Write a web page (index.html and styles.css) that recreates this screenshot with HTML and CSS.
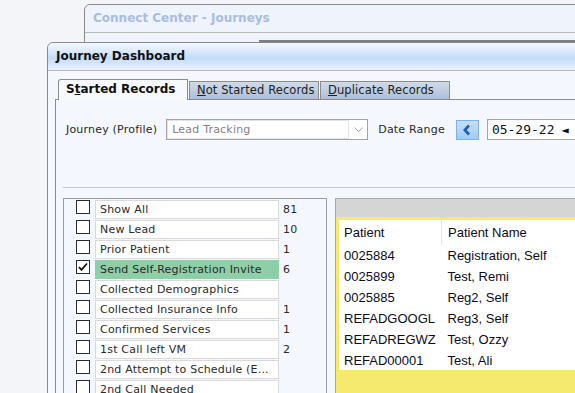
FILE: index.html
```html
<!DOCTYPE html>
<html>
<head>
  <title>Journey Dashboard</title>
  <link rel="stylesheet" href="styles.css">
</head>
<body>

<div class="desktop">

  <!-- Parent window, behind -->
  <div class="window window-back">
    <div class="titlebar">Connect Center - Journeys</div>
    <div class="back-body">
      <div class="back-pane"></div>
    </div>
  </div>

  <!-- Journey Dashboard window -->
  <div class="window window-front">
    <div class="titlebar">Journey Dashboard</div>
    <div class="client">

      <div class="tabs">
        <div class="tab active">S<u>t</u>arted Records</div>
        <div class="tab"><u>N</u>ot Started Records</div>
        <div class="tab"><u>D</u>uplicate Records</div>
      </div>

      <div class="tab-panel">
        <div class="filters">
          <span class="field-label">Journey (Profile)</span>
          <div class="combo">
            <span class="combo-text">Lead Tracking</span>
            <span class="combo-arrow">
              <svg width="9" height="6" viewBox="0 0 9 6"><path d="M0.5 0.5 L4.5 4.5 L8.5 0.5" fill="none" stroke="#a8a8a8" stroke-width="1"/></svg>
            </span>
          </div>
          <span class="field-label date-label">Date Range</span>
          <button class="nav-btn">
            <svg width="10" height="12" viewBox="0 0 10 12"><path d="M7 1.5 L2.8 6 L7 10.5" fill="none" stroke="#1c5fb8" stroke-width="2.6"/></svg>
          </button>
          <div class="date-box">05-29-22<span class="spin">&#9668;</span></div>
        </div>

        <div class="divider"></div>

        <div class="lists">
          <div class="status-list">
            <div class="status-row"><span class="check"></span><span class="status-name">Show All</span><span class="status-count">81</span></div>
            <div class="status-row"><span class="check"></span><span class="status-name">New Lead</span><span class="status-count">10</span></div>
            <div class="status-row"><span class="check"></span><span class="status-name">Prior Patient</span><span class="status-count">1</span></div>
            <div class="status-row selected"><span class="check checked">
              <svg width="12" height="12" viewBox="0 0 12 12"><path d="M2 6 L4.5 8.8 L10 2.5" fill="none" stroke="#111" stroke-width="1.8"/></svg>
            </span><span class="status-name">Send Self-Registration Invite</span><span class="status-count">6</span></div>
            <div class="status-row"><span class="check"></span><span class="status-name">Collected Demographics</span><span class="status-count"></span></div>
            <div class="status-row"><span class="check"></span><span class="status-name">Collected Insurance Info</span><span class="status-count">1</span></div>
            <div class="status-row"><span class="check"></span><span class="status-name">Confirmed Services</span><span class="status-count">1</span></div>
            <div class="status-row"><span class="check"></span><span class="status-name">1st Call left VM</span><span class="status-count">2</span></div>
            <div class="status-row"><span class="check"></span><span class="status-name">2nd Attempt to Schedule (E...</span><span class="status-count"></span></div>
            <div class="status-row"><span class="check"></span><span class="status-name">2nd Call Needed</span><span class="status-count"></span></div>
          </div>

          <div class="records">
            <div class="records-bar"></div>
            <div class="records-frame">
              <div class="records-grid">
                <table class="records-table">
                  <thead>
                    <tr><th class="col-id">Patient</th><th>Patient Name</th></tr>
                  </thead>
                  <tbody>
                    <tr><td>0025884</td><td>Registration, Self</td></tr>
                    <tr><td>0025899</td><td>Test, Remi</td></tr>
                    <tr><td>0025885</td><td>Reg2, Self</td></tr>
                    <tr><td>REFADGOOGL</td><td>Reg3, Self</td></tr>
                    <tr><td>REFADREGWZ</td><td>Test, Ozzy</td></tr>
                    <tr><td>REFAD00001</td><td>Test, Ali</td></tr>
                  </tbody>
                </table>
              </div>
            </div>
          </div>
        </div>
      </div>

    </div>
  </div>

</div>

</body>
</html>
```

FILE: styles.css
```css
body {
  margin: 0;
  font-family: "DejaVu Sans", Verdana, sans-serif;
  font-size: 11px;
  letter-spacing: 0.2px;
  color: #2a2a2a;
  background-color: #f3f5f8;
  overflow: hidden;
}

.desktop {
  position: relative;
  width: 575px;
  height: 393px;
  overflow: hidden;
}

/* Windows */
.window {
  position: absolute;
  border: 1px solid #8a8a8a;
  border-top-left-radius: 6px;
  background-color: #f4f7fd;
}

.window .titlebar {
  height: 27px;
  line-height: 27px;
  padding-left: 8px;
  font-size: 12px;
  font-weight: bold;
  letter-spacing: 0;
  border-bottom: 1px solid #b9b9b9;
  border-top-left-radius: 6px;
}

.window-back {
  left: 84px;
  top: 4px;
  width: 600px;
  height: 400px;
  background-color: #eef3fc;
}

.window-back .titlebar {
  color: #a9bedb;
  background-color: #eef3fc;
}

.back-body {
  padding-top: 7px;
  padding-left: 174px;
}

.back-pane {
  border-top: 2px solid #7f7f7f;
  height: 100px;
}

.window-front {
  left: 47px;
  top: 42px;
  width: 600px;
  height: 400px;
}

.window-front .titlebar {
  color: #111;
  background: linear-gradient(to bottom, #f3f8fe 0%, #dce9fb 30%, #c3dcfa 55%, #d6e6fb 78%, #edf3fc 100%);
}

.client {
  padding: 8px 0 0 7px;
}

/* Tabs */
.tabs {
  display: flex;
  align-items: flex-end;
  height: 20px;
  padding-left: 3px;
  border-bottom: 1px solid #8c8c8c;
}

.tab {
  box-sizing: border-box;
  width: 130px;
  height: 18px;
  line-height: 17px;
  padding-left: 7px;
  border: 1px solid #8c8c8c;
  border-bottom: none;
  margin-right: 1px;
  background: linear-gradient(to bottom, #cfdbea, #adbfd7);
  color: #222;
  font-size: 11.5px;
  letter-spacing: 0.1px;
}

.tab.active {
  height: 21px;
  margin-bottom: -1px;
  line-height: 19px;
  background: #f7f9fd;
  font-weight: bold;
  font-size: 12px;
  letter-spacing: 0;
  color: #111;
  border-top-left-radius: 3px;
}

.tab-panel {
  border-left: 1px solid #8c8c8c;
  padding: 19px 0 0 10px;
  height: 320px;
}

/* Filters */
.filters {
  display: flex;
  align-items: center;
  height: 21px;
}

.field-label {
  margin-right: 9px;
}

.date-label {
  margin-left: 10px;
  margin-right: 11px;
}

.combo {
  box-sizing: border-box;
  display: flex;
  width: 202px;
  height: 21px;
  border: 1px solid #a3a3a3;
  background: #fff;
}

.combo-text {
  flex: 1;
  padding-left: 4px;
  line-height: 17px;
  border: 1px solid #e3e3e3;
  color: #8d7b82;
}

.combo-arrow {
  width: 18px;
  display: flex;
  align-items: center;
  justify-content: center;
}

.nav-btn {
  box-sizing: border-box;
  width: 23px;
  height: 20px;
  padding: 0;
  border: 1px solid #7fb0e6;
  background: linear-gradient(to bottom, #c4def8, #a3cbf4);
  display: flex;
  align-items: center;
  justify-content: center;
  margin-right: 8px;
}

.date-box {
  box-sizing: border-box;
  height: 21px;
  width: 100px;
  border: 1px solid #a3a3a3;
  background: #fff;
  font-family: "DejaVu Sans Mono", monospace;
  font-size: 13px;
  letter-spacing: 0;
  color: #111;
  line-height: 19px;
  padding-left: 4px;
  white-space: nowrap;
}

.date-box .spin {
  font-size: 12px;
  margin-left: 7px;
}

.divider {
  margin: 47px 0 0 -3px;
  border-top: 1px solid #c8c8c8;
}

/* Lists */
.lists {
  display: flex;
  margin: 10px 0 0 -3px;
}

.status-list {
  box-sizing: border-box;
  width: 264px;
  height: 200px;
  border: 1px solid #9c9c9c;
  border-bottom: none;
  background: #f4f7fd;
}

.status-row {
  display: flex;
  align-items: center;
  height: 20px;
}

.check {
  box-sizing: border-box;
  width: 14px;
  height: 14px;
  margin: 0 5px 4px 12px;
  border: 1px solid #2b2b2b;
  background: #fff;
  display: flex;
  align-items: center;
  justify-content: center;
}

.status-name {
  box-sizing: border-box;
  width: 184px;
  height: 19px;
  line-height: 17px;
  padding-left: 4px;
  border: 1px solid #d9d9d9;
  background: #fff;
  white-space: nowrap;
  overflow: hidden;
}

.selected .status-name {
  background: #8dcfa6;
  border-color: #8dcfa6;
}

.status-count {
  padding-left: 4px;
}

.records {
  flex: 1;
  margin-left: 8px;
  border-left: 1px solid #a8a8a8;
}

.records-bar {
  height: 18px;
  border-top: 1px solid #a8a8a8;
  background: #d5d5d5;
}

.records-frame {
  padding: 3px 0 0 3px;
  height: 180px;
  background: #f6ea6e;
}

.records-grid {
  height: 150px;
  overflow: hidden;
  background: #fff;
}

.records-table {
  width: 100%;
  border-collapse: collapse;
  font-family: "Liberation Sans", Arial, sans-serif;
  font-size: 13px;
  letter-spacing: 0;
  color: #0b0b1e;
}

.records-table th {
  height: 25px;
  padding: 0 0 0 6px;
  text-align: left;
  font-weight: normal;
}

.records-table th.col-id {
  width: 97px;
  padding-left: 5px;
  border-right: 1px solid #e6e6e6;
}

.records-table td {
  height: 21px;
  padding: 0 0 0 6px;
}

.records-table td:first-child {
  padding-left: 5px;
}
```
